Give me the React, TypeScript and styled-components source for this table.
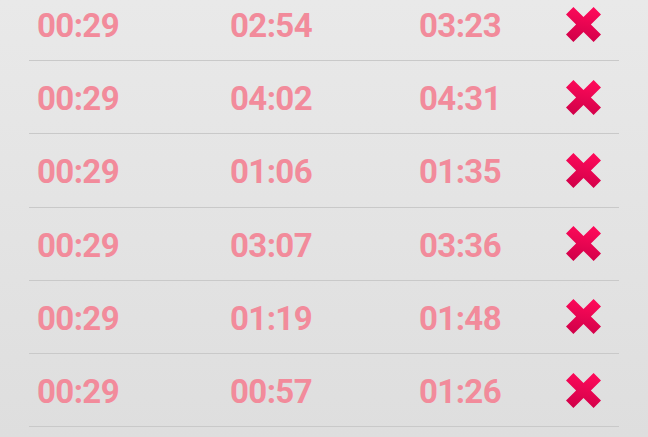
import React from "react";
import styled, { createGlobalStyle } from "styled-components";

const GlobalStyle = createGlobalStyle`
  html, body {
    margin: 0;
    padding: 0;
    height: 100%;
  }
  body {
    font-family: Roboto, "Liberation Sans", sans-serif;
    background: linear-gradient(180deg, #e9e9e9 0%, #dfdfdf 100%);
    overflow: hidden;
  }
`;

const Screen = styled.div`
  width: 648px;
  height: 437px;
  overflow: hidden;
  background: linear-gradient(180deg, #e9e9e9 0%, #dedede 100%);
`;

const List = styled.ul`
  list-style: none;
  margin: -12px 29px 0 29px;
  padding: 0;
`;

const Row = styled.li`
  display: grid;
  grid-template-columns: 193px 189px 1fr 35px;
  align-items: center;
  height: 69.2px;
  padding: 3px 18px 0 8px;
  border-bottom: 1px solid #c9c9c9;
`;

const Time = styled.span`
  font-size: 33px;
  font-weight: 700;
  color: #f28b9b;
  letter-spacing: -0.6px;
  line-height: 1;
`;

const DeleteButton = styled.button`
  width: 35px;
  height: 35px;
  padding: 0;
  margin-top: -3px;
  border: none;
  background: none;
  display: flex;
  align-items: center;
  justify-content: center;
  cursor: pointer;
`;

function CrossIcon() {
  return (
    <svg width="35" height="35" viewBox="0 0 35 35">
      <defs>
        <linearGradient id="crossFill" x1="0.6" y1="0" x2="0.4" y2="1">
          <stop offset="0" stopColor="#ff0a5a" />
          <stop offset="1" stopColor="#d10049" />
        </linearGradient>
      </defs>
      <path
        d="M0 7.4 L7.4 0 L17.5 10.1 L27.6 0 L35 7.4 L24.9 17.5 L35 27.6 L27.6 35 L17.5 24.9 L7.4 35 L0 27.6 L10.1 17.5 Z"
        fill="url(#crossFill)"
      />
    </svg>
  );
}

const laps = [
  ["00:29", "02:54", "03:23"],
  ["00:29", "04:02", "04:31"],
  ["00:29", "01:06", "01:35"],
  ["00:29", "03:07", "03:36"],
  ["00:29", "01:19", "01:48"],
  ["00:29", "00:57", "01:26"],
];

export default function App() {
  return (
    <>
      <GlobalStyle />
      <Screen>
        <List>
          {laps.map((lap, key) => (
            <Row key={key}>
              <Time>{lap[0]}</Time>
              <Time>{lap[1]}</Time>
              <Time>{lap[2]}</Time>
              <DeleteButton aria-label="delete">
                <CrossIcon />
              </DeleteButton>
            </Row>
          ))}
        </List>
      </Screen>
    </>
  );
}
